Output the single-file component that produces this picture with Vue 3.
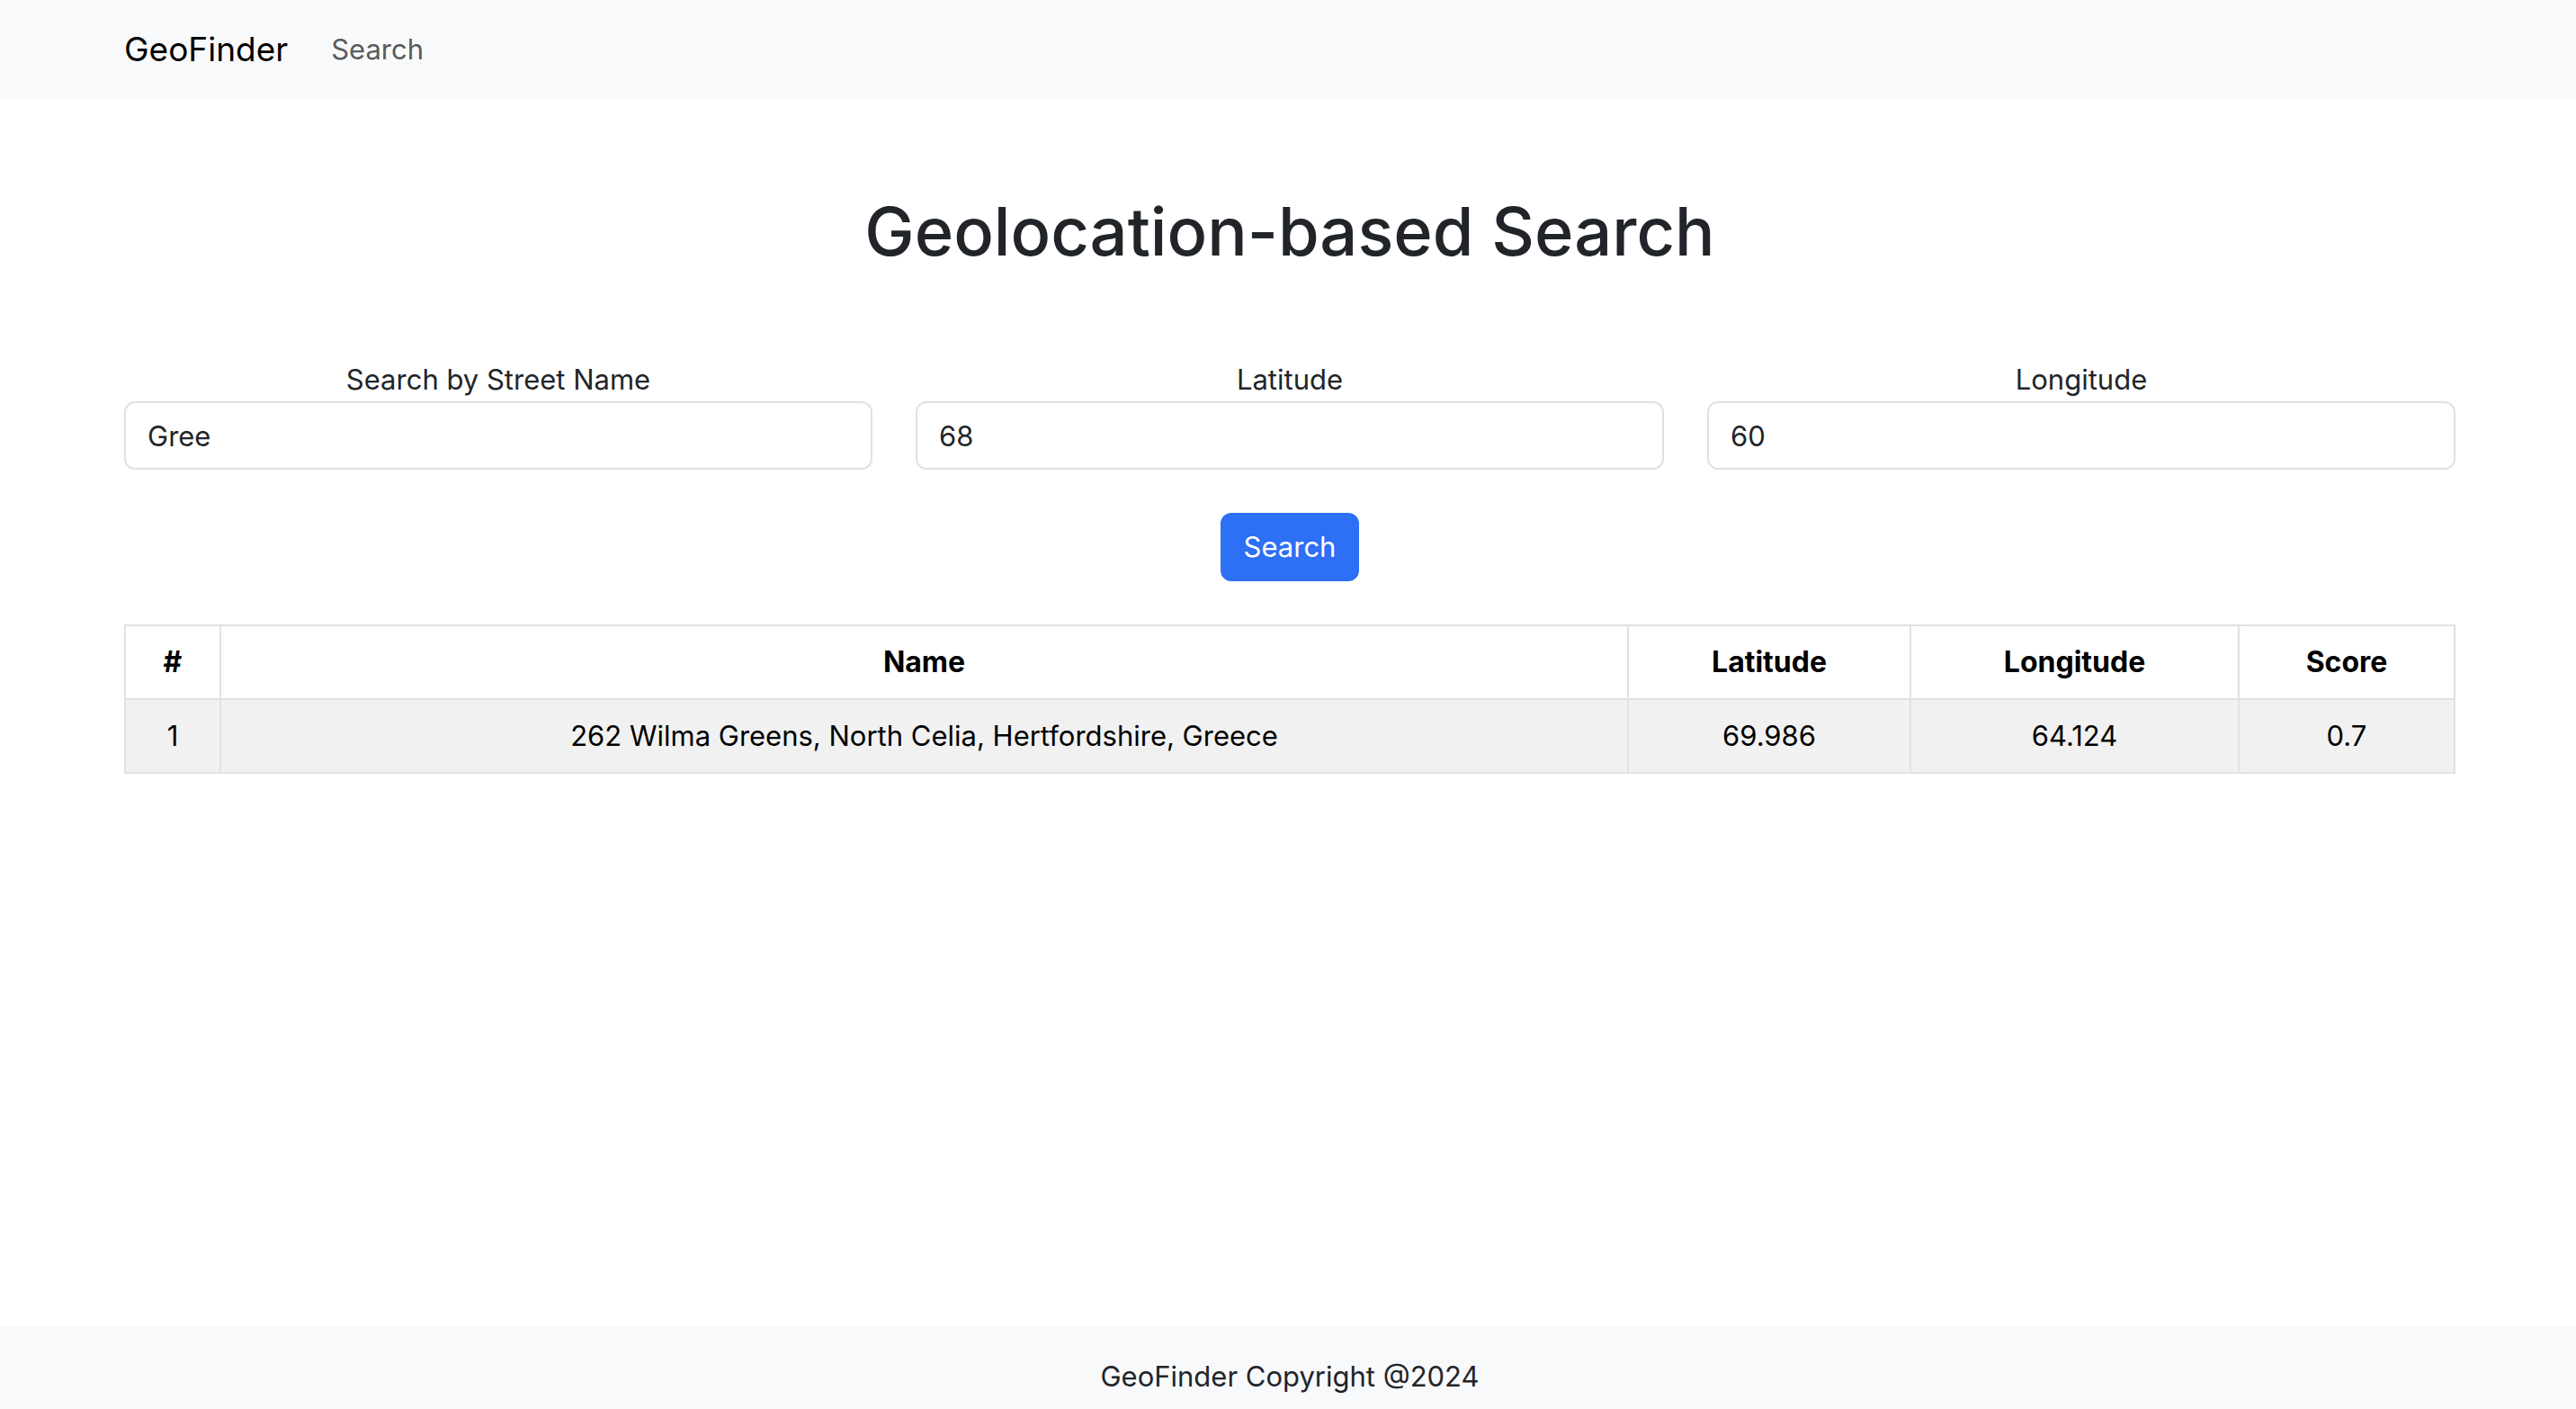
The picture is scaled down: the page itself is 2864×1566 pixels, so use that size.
<script setup>
import { ref } from 'vue'

const street = ref('Gree')
const latitude = ref('68')
const longitude = ref('60')
const results = [
  { name: '262 Wilma Greens, North Celia, Hertfordshire, Greece', lat: '69.986', lng: '64.124', score: '0.7' }
]
</script>

<template>
  <div class="page">
    <nav class="navbar">
      <div class="container nav-inner">
        <a class="brand" href="#">GeoFinder</a>
        <a class="nav-link" href="#">Search</a>
      </div>
    </nav>

    <main class="container main">
      <h1>Geolocation-based Search</h1>
      <form @submit.prevent>
        <div class="fields">
          <div class="field">
            <label for="street">Search by Street Name</label>
            <input id="street" v-model="street" type="text">
          </div>
          <div class="field">
            <label for="latitude">Latitude</label>
            <input id="latitude" v-model="latitude" type="text">
          </div>
          <div class="field">
            <label for="longitude">Longitude</label>
            <input id="longitude" v-model="longitude" type="text">
          </div>
        </div>
        <button class="submit" type="submit">Search</button>
      </form>

      <table>
        <colgroup>
          <col class="col-index">
          <col>
          <col class="col-lat">
          <col class="col-lng">
          <col class="col-score">
        </colgroup>
        <thead>
          <tr>
            <th>#</th>
            <th>Name</th>
            <th>Latitude</th>
            <th>Longitude</th>
            <th>Score</th>
          </tr>
        </thead>
        <tbody>
          <tr v-for="(row, i) in results" :key="row.name">
            <td>{{ i + 1 }}</td>
            <td>{{ row.name }}</td>
            <td>{{ row.lat }}</td>
            <td>{{ row.lng }}</td>
            <td>{{ row.score }}</td>
          </tr>
        </tbody>
      </table>
    </main>

    <footer class="footer">
      <div class="container">GeoFinder Copyright @2024</div>
    </footer>
  </div>
</template>

<style>
body {
  margin: 0;
  background: #fff;
}
</style>

<style scoped>
.page {
  display: flex;
  flex-direction: column;
  min-height: 100vh;
  font-family: Inter, "Liberation Sans", sans-serif;
  font-size: 31px;
  line-height: 48px;
  color: #212529;
}

.container {
  box-sizing: border-box;
  width: 100%;
  max-width: 2640px;
  margin: 0 auto;
  padding: 0 22px 0 26px;
}

.navbar {
  padding: 16px 0;
  background: #f8f9fb;
}

.nav-inner {
  display: flex;
  align-items: center;
  gap: 48px;
}

.brand {
  padding: 8px 0;
  font-size: 37px;
  line-height: 62px;
  color: #000;
  text-decoration: none;
}

.nav-link {
  color: #5a5b5c;
  text-decoration: none;
}

.main {
  flex: 1;
  padding-top: 96px;
  text-align: center;
}

h1 {
  margin: 0 0 90px;
  font-size: 74px;
  font-weight: 500;
  line-height: 102px;
}

.fields {
  display: grid;
  grid-template-columns: repeat(3, 1fr);
  gap: 48px;
}

.field {
  display: flex;
  flex-direction: column;
}

input {
  box-sizing: border-box;
  width: 100%;
  height: 76px;
  padding: 12px 24px;
  border: 2px solid #dee2e6;
  border-radius: 12px;
  background: #fff;
  font: inherit;
  color: #212529;
}

.submit {
  display: block;
  margin: 48px auto;
  padding: 12px 24px;
  border: 2px solid #2d6ff5;
  border-radius: 12px;
  background: #2d6ff5;
  font: inherit;
  color: #fff;
}

table {
  width: 100%;
  border-collapse: collapse;
  table-layout: fixed;
  color: #000;
}

.col-index {
  width: 106px;
}

.col-lat {
  width: 314px;
}

.col-lng {
  width: 365px;
}

.col-score {
  width: 240px;
}

th,
td {
  padding: 16px;
  border: 2px solid #dee2e6;
}

th {
  font-size: 32px;
  font-weight: 700;
}

td {
  background: #f1f1f1;
}

.footer {
  padding: 32px 0 12px;
  background: #f8f9fb;
  text-align: center;
}
</style>
